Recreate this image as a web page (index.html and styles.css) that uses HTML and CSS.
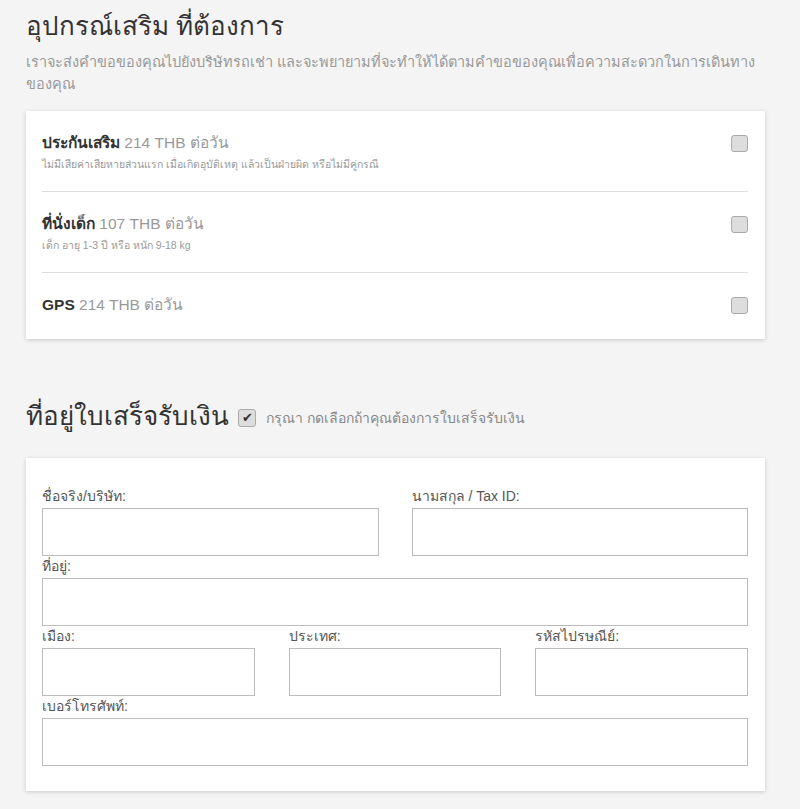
FILE: index.html
```html
<!DOCTYPE html>
<html lang="th">
<head>
    <meta charset="UTF-8">
    <title>อุปกรณ์เสริม</title>
    <link rel="stylesheet" href="styles.css">
</head>
<body>
    <div class="page">
        <h2 class="section-title">อุปกรณ์เสริม ที่ต้องการ</h2>
        <p class="intro">เราจะส่งคำขอของคุณไปยังบริษัทรถเช่า และจะพยายามที่จะทำให้ได้ตามคำขอของคุณเพื่อความสะดวกในการเดินทาง<br>ของคุณ</p>

        <div class="card extras">
            <div class="extra">
                <div class="extra-text">
                    <div class="extra-name"><b>ประกันเสริม</b> 214 THB ต่อวัน</div>
                    <div class="extra-note">ไม่มีเสียค่าเสียหายส่วนแรก เมื่อเกิดอุบัติเหตุ แล้วเป็นฝ่ายผิด หรือไม่มีคู่กรณี</div>
                </div>
                <span class="box"></span>
            </div>
            <div class="extra">
                <div class="extra-text">
                    <div class="extra-name"><b>ที่นั่งเด็ก</b> 107 THB ต่อวัน</div>
                    <div class="extra-note">เด็ก อายุ 1-3 ปี หรือ หนัก 9-18 kg</div>
                </div>
                <span class="box"></span>
            </div>
            <div class="extra">
                <div class="extra-text">
                    <div class="extra-name"><b>GPS</b> 214 THB ต่อวัน</div>
                </div>
                <span class="box"></span>
            </div>
        </div>

        <div class="invoice-head">
            <h2 class="section-title">ที่อยู่ใบเสร็จรับเงิน</h2>
            <span class="box checked">✔</span>
            <span class="hint">กรุณา กดเลือกถ้าคุณต้องการใบเสร็จรับเงิน</span>
        </div>

        <div class="card form">
            <div class="row two">
                <div class="field">
                    <label>ชื่อจริง/บริษัท:</label>
                    <input type="text">
                </div>
                <div class="field">
                    <label>นามสกุล / Tax ID:</label>
                    <input type="text">
                </div>
            </div>
            <div class="field">
                <label>ที่อยู่:</label>
                <input type="text">
            </div>
            <div class="row three">
                <div class="field">
                    <label>เมือง:</label>
                    <input type="text">
                </div>
                <div class="field">
                    <label>ประเทศ:</label>
                    <input type="text">
                </div>
                <div class="field">
                    <label>รหัสไปรษณีย์:</label>
                    <input type="text">
                </div>
            </div>
            <div class="field">
                <label>เบอร์โทรศัพท์:</label>
                <input type="text">
            </div>
        </div>
    </div>
</body>
</html>
```

FILE: styles.css
```css
body {
    margin: 0;
    background-color: #f4f4f4;
    font-family: "Liberation Sans", "Noto Sans", Arial, sans-serif;
    color: #333;
}
.page {
    width: 739px;
    padding: 8px 0 20px 26px;
}
.section-title {
    font-size: 26px;
    font-weight: normal;
    color: #333;
    margin: 0;
    line-height: 36px;
}
.intro {
    font-size: 14.5px;
    color: #999;
    line-height: 22px;
    margin: 7px 0 16px;
}
.card {
    background-color: white;
    box-shadow: 0 1px 4px rgba(0,0,0,0.18);
}
.extras {
    padding: 0 17px 0 16px;
}
.extra {
    display: flex;
    justify-content: space-between;
    align-items: flex-start;
    border-bottom: 1px solid #ddd;
    padding: 21px 0 15px;
    min-height: 44px;
}
.extra:last-child {
    border-bottom: none;
    min-height: 30px;
    padding-bottom: 15px;
}
.extra-name {
    font-size: 15.5px;
    color: #999;
    line-height: 22px;
}
.extra-name b {
    color: #333;
}
.extra-note {
    font-size: 10.5px;
    color: #999;
    margin-top: 2px;
}
.box {
    width: 15px;
    height: 15px;
    border: 1px solid #aaa;
    border-radius: 3px;
    background-color: #ddd;
    margin-top: 3px;
    font-size: 13px;
    line-height: 15px;
    text-align: center;
    color: #333;
}
.invoice-head {
    display: flex;
    align-items: center;
    margin-top: 59px;
    margin-bottom: 24px;
}
.invoice-head .box {
    width: 16px;
    height: 16px;
    line-height: 16px;
    margin: 4px 10px 0 9px;
}
.hint {
    font-size: 14px;
    color: #888;
    margin-top: 4px;
}
.form {
    padding: 28px 17px 25px 16px;
}
.row {
    display: grid;
    column-gap: 33px;
}
.two {
    grid-template-columns: 1fr 1fr;
}
.three {
    grid-template-columns: 1fr 1fr 1fr;
    column-gap: 34px;
}
.field label {
    display: block;
    font-size: 14px;
    color: #555;
    line-height: 21px;
    margin-bottom: 1px;
}
.field input {
    display: block;
    width: 100%;
    box-sizing: border-box;
    height: 48px;
    border: 1px solid #bbb;
    margin: 0;
}
```
